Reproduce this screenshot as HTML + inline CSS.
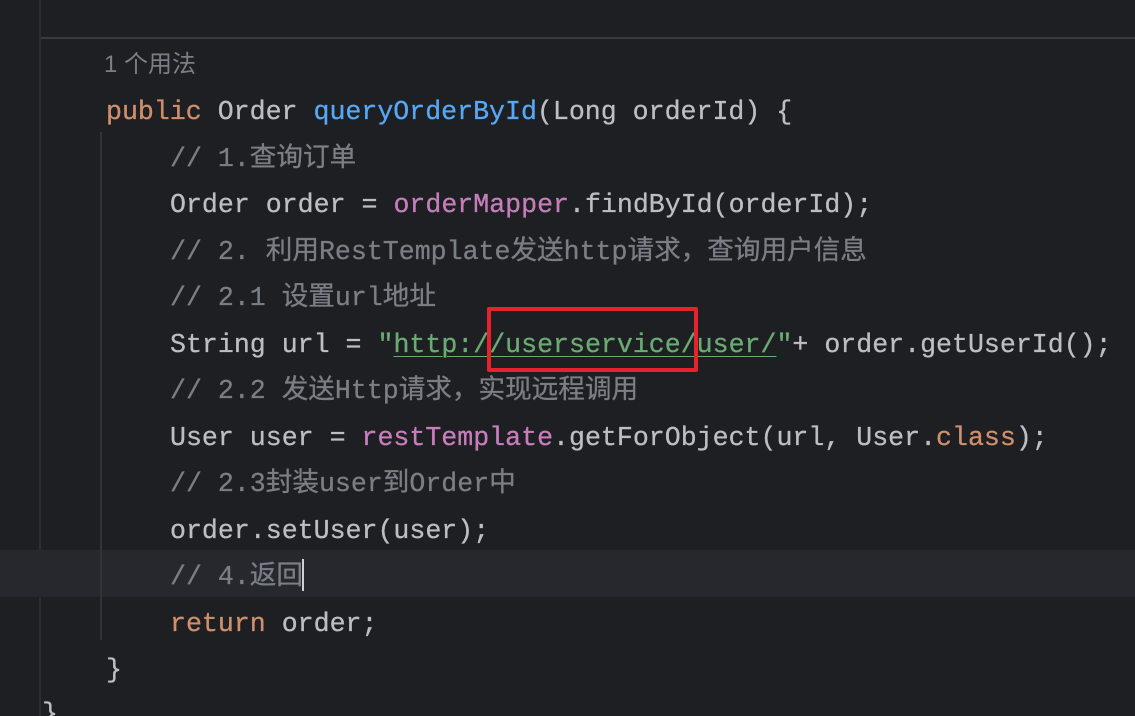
<!DOCTYPE html>
<html><head><meta charset="utf-8"><style>
html,body{margin:0;padding:0;width:1135px;height:716px;background:#1e1f22;overflow:hidden;position:relative}
.l{position:absolute;white-space:pre;font-family:"Liberation Mono","Noto Sans CJK SC",monospace;font-size:26.6px;line-height:30px;color:#bcbec4;-webkit-text-stroke:0.3px currentColor}
.k{color:#cf8e6d}.f{color:#56a8f5}.c{color:#7a7e85}.m{color:#c77dbb}.s{color:#6aab73;text-decoration:underline;text-decoration-thickness:1px;text-underline-offset:4px}
.h{font-family:"Liberation Sans","Noto Sans CJK SC",sans-serif;font-size:24px;color:#7a7e85;-webkit-text-stroke:0}
</style></head><body>
<div style="position:absolute;left:39px;top:0;width:2px;height:716px;background:#2b2d30"></div>
<div style="position:absolute;left:41px;top:37px;width:1094px;height:2px;background:#393b40"></div>
<div style="position:absolute;left:0;top:550px;width:1135px;height:47px;background:#26282e"></div>
<div style="position:absolute;left:100px;top:132px;width:2px;height:508px;background:#313335"></div>
<div class="l h" style="left:104px;top:50px">1 个用法</div>
<div class="l" style="left:106px;top:97px"><span class="k">public</span> Order <span class="f">queryOrderById</span>(Long orderId) {</div>
<div class="l c" style="left:170px;top:144px">// 1.查询订单</div>
<div class="l" style="left:170px;top:190px">Order order = <span class="m">orderMapper</span>.findById(orderId);</div>
<div class="l c" style="left:170px;top:237px">// 2. 利用RestTemplate发送http请求，查询用户信息</div>
<div class="l c" style="left:170px;top:283px">// 2.1 设置url地址</div>
<div class="l" style="left:170px;top:330px">String url = <span style="color:#6aab73">"</span><span class="s">http://userservice/user/</span><span style="color:#6aab73">"</span>+ order.getUserId();</div>
<div class="l c" style="left:170px;top:376px">// 2.2 发送Http请求，实现远程调用</div>
<div class="l" style="left:170px;top:423px">User user = <span class="m">restTemplate</span>.getForObject(url, User.<span class="k">class</span>);</div>
<div class="l c" style="left:170px;top:469px">// 2.3封装user到Order中</div>
<div class="l" style="left:170px;top:516px">order.setUser(user);</div>
<div class="l c" style="left:170px;top:562px">// 4.返回</div>
<div style="position:absolute;left:302px;top:559px;width:2px;height:32px;background:#ced0d6"></div>
<div class="l" style="left:170px;top:609px"><span class="k">return</span> order;</div>
<div class="l" style="left:106px;top:655px">}</div>
<div class="l" style="left:42px;top:699px">}</div>
<div style="position:absolute;left:487px;top:307px;width:203px;height:57px;border:4px solid #e8222c;border-radius:2px"></div>
</body></html>
